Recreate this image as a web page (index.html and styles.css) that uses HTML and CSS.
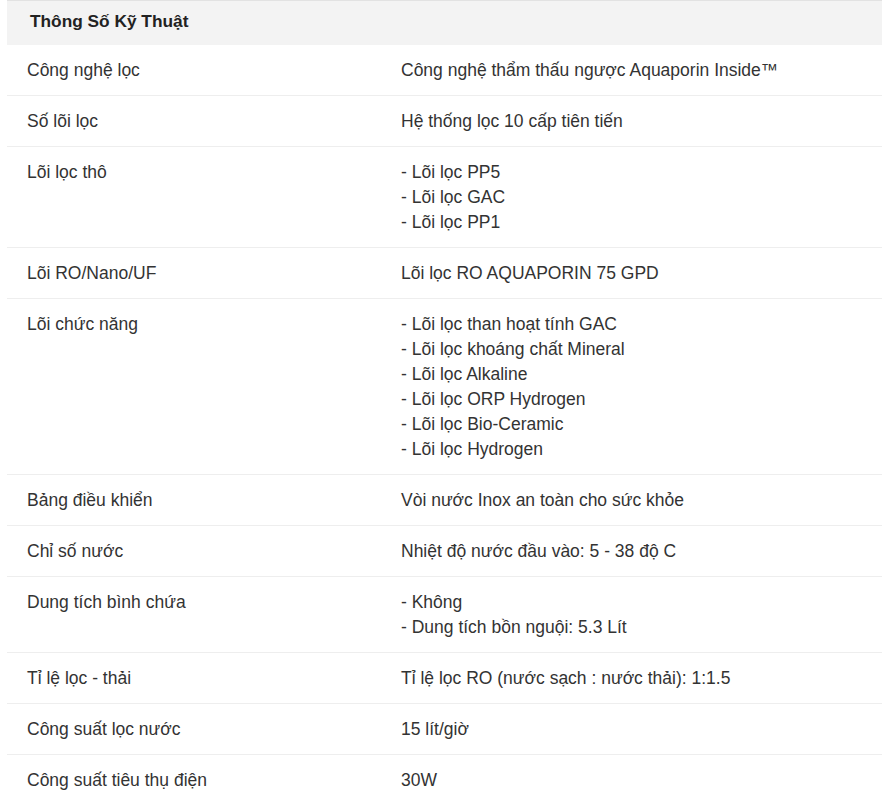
FILE: index.html
```html
<!DOCTYPE html>
<html lang="vi">
<head>
<meta charset="utf-8">
<title>Thông Số Kỹ Thuật</title>
<link rel="stylesheet" href="styles.css">
</head>
<body>
<div class="specs">
  <div class="specs-head">Thông Số Kỹ Thuật</div>
  <div class="row"><div class="label">Công nghệ lọc</div><div class="value">Công nghệ thẩm thấu ngược Aquaporin Inside™</div></div>
  <div class="row"><div class="label">Số lõi lọc</div><div class="value">Hệ thống lọc 10 cấp tiên tiến</div></div>
  <div class="row"><div class="label">Lõi lọc thô</div><div class="value">- Lõi lọc PP5<br>- Lõi lọc GAC<br>- Lõi lọc PP1</div></div>
  <div class="row"><div class="label">Lõi RO/Nano/UF</div><div class="value">Lõi lọc RO AQUAPORIN 75 GPD</div></div>
  <div class="row"><div class="label">Lõi chức năng</div><div class="value">- Lõi lọc than hoạt tính GAC<br>- Lõi lọc khoáng chất Mineral<br>- Lõi lọc Alkaline<br>- Lõi lọc ORP Hydrogen<br>- Lõi lọc Bio-Ceramic<br>- Lõi lọc Hydrogen</div></div>
  <div class="row"><div class="label">Bảng điều khiển</div><div class="value">Vòi nước Inox an toàn cho sức khỏe</div></div>
  <div class="row"><div class="label">Chỉ số nước</div><div class="value">Nhiệt độ nước đầu vào: 5 - 38 độ C</div></div>
  <div class="row"><div class="label">Dung tích bình chứa</div><div class="value">- Không<br>- Dung tích bồn nguội: 5.3 Lít</div></div>
  <div class="row"><div class="label">Tỉ lệ lọc - thải</div><div class="value">Tỉ lệ lọc RO (nước sạch : nước thải): 1:1.5</div></div>
  <div class="row"><div class="label">Công suất lọc nước</div><div class="value">15 lít/giờ</div></div>
  <div class="row"><div class="label">Công suất tiêu thụ điện</div><div class="value">30W</div></div>
</div>
</body>
</html>
```
FILE: styles.css
```css
html, body {
  margin: 0;
  padding: 0;
  background: #fff;
}
body {
  font-family: "Liberation Sans", Arial, sans-serif;
  font-size: 17.5px;
  color: #333;
}
.specs {
  margin-left: 7px;
  width: 875px;
}
.specs-head {
  background: #f3f3f3;
  border-top: 1px solid #e2e2e2;
  font-weight: bold;
  font-size: 17.3px;
  color: #222;
  padding: 8px 23px 11px;
  line-height: 25px;
}
.row {
  display: grid;
  grid-template-columns: 374px 1fr;
  border-bottom: 1px solid #eeeeee;
  line-height: 25px;
}
.row:last-child {
  border-bottom: none;
}
.label, .value {
  padding: 13px 20px 12px;
}
```
